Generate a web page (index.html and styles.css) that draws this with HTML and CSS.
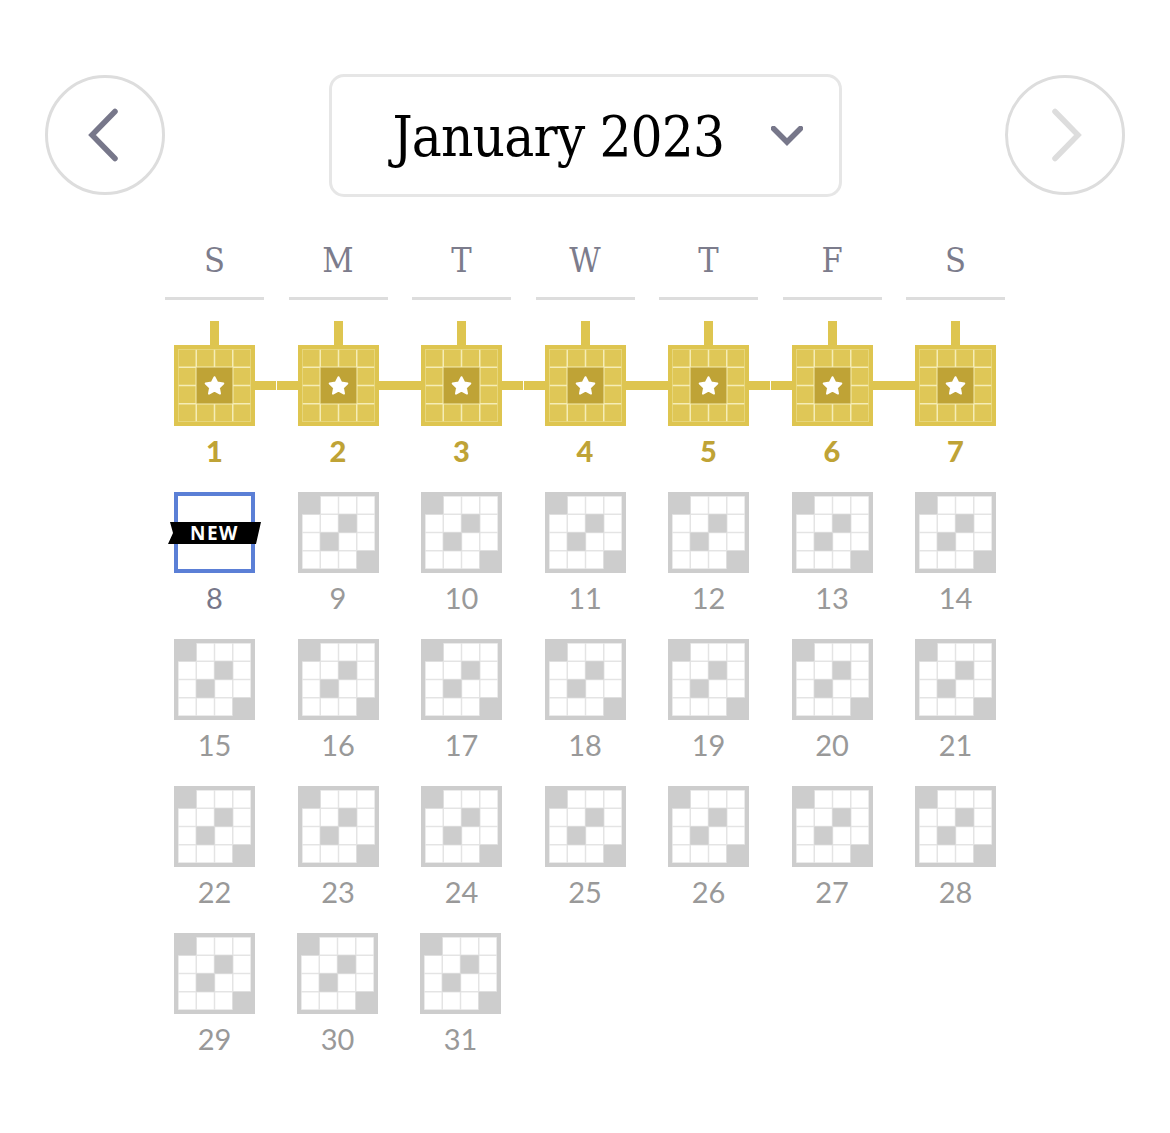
FILE: index.html
```html
<!DOCTYPE html>
<html lang="en">

<head>
  <meta charset="UTF-8">
  <meta name="viewport" content="width=device-width, initial-scale=1.0">
  <title>Archive</title>
  <link rel="stylesheet" href="styles.css">
</head>

<body>
  <svg class="defs" aria-hidden="true">
    <symbol id="whiteCells" viewBox="0 0 81 81">
      <rect x="23" y="4.75" width="16.75" height="16.75" />
      <rect x="41.25" y="4.75" width="16.75" height="16.75" />
      <rect x="59.5" y="4.75" width="16.75" height="16.75" />
      <rect x="4.75" y="23" width="16.75" height="16.75" />
      <rect x="23" y="23" width="16.75" height="16.75" />
      <rect x="59.5" y="23" width="16.75" height="16.75" />
      <rect x="4.75" y="41.25" width="16.75" height="16.75" />
      <rect x="41.25" y="41.25" width="16.75" height="16.75" />
      <rect x="59.5" y="41.25" width="16.75" height="16.75" />
      <rect x="4.75" y="59.5" width="16.75" height="16.75" />
      <rect x="23" y="59.5" width="16.75" height="16.75" />
      <rect x="41.25" y="59.5" width="16.75" height="16.75" />
    </symbol>
    <symbol id="blank" viewBox="0 0 81 81">
      <rect width="81" height="81" fill="#cdcdcd" />
      <rect x="4" y="4" width="73" height="73" fill="#e4e4e4" />
      <rect x="0" y="0" width="22.25" height="22.25" fill="#cdcdcd" />
      <rect x="40.5" y="22.25" width="18.25" height="18.25" fill="#cdcdcd" />
      <rect x="22.25" y="40.5" width="18.25" height="18.25" fill="#cdcdcd" />
      <rect x="58.75" y="58.75" width="22.25" height="22.25" fill="#cdcdcd" />
      <use href="#whiteCells" fill="#fff" />
    </symbol>
    <symbol id="solved" viewBox="0 0 81 81">
      <rect width="81" height="81" fill="#dec550" />
      <rect x="4" y="4" width="73" height="73" fill="#f5ecb5" />
      <rect x="4.4" y="4.4" width="72.2" height="72.2" fill="none" stroke="#e8d77c" stroke-width="0.8" />
      <rect x="4.75" y="4.75" width="16.75" height="16.75" fill="#dfc757" />
      <rect x="59.5" y="59.5" width="16.75" height="16.75" fill="#dfc757" />
      <rect x="23" y="41.25" width="16.75" height="16.75" fill="#dfc757" />
      <rect x="41.25" y="23" width="16.75" height="16.75" fill="#dfc757" />
      <use href="#whiteCells" fill="#dfc757" />
      <rect x="22.5" y="22.5" width="36" height="36" fill="#bfa336" />
      <path d="M40.5 32.2l2.8 5.4 6 .9-4.4 4.2 1.1 5.9-5.5-2.9-5.5 2.9 1.1-5.9-4.4-4.2 6-.9z" fill="#fff" stroke="#fff" stroke-width="2" stroke-linejoin="round" />
    </symbol>
  </svg>

  <div class="header">
    <button class="arrow">
      <svg class="arrow-icon" viewBox="0 0 36 60">
        <path d="M28 6.5L5 30l23 23.5" stroke="#77778a" />
      </svg>
    </button>
    <button class="month">
      <span class="month-name">January 2023</span>
      <svg class="month-icon" viewBox="0 0 32 20">
        <path d="M2.5 2.5L16 16 29.5 2.5" stroke="#77778a" />
      </svg>
    </button>
    <button class="arrow">
      <svg class="arrow-icon" viewBox="0 0 36 60">
        <path d="M8 6.5L31 30 8 53.5" stroke="#ddd" />
      </svg>
    </button>
  </div>

  <div class="calendar">
    <div class="week weekdays">
      <div class="weekday">S</div>
      <div class="weekday">M</div>
      <div class="weekday">T</div>
      <div class="weekday">W</div>
      <div class="weekday">T</div>
      <div class="weekday">F</div>
      <div class="weekday">S</div>
    </div>

    <div class="week">
      <div class="day done split"><div class="puzzle"><svg><use href="#solved" /></svg></div><div class="num">1</div></div>
      <div class="day done"><div class="puzzle"><svg><use href="#solved" /></svg></div><div class="num">2</div></div>
      <div class="day done split"><div class="puzzle"><svg><use href="#solved" /></svg></div><div class="num">3</div></div>
      <div class="day done"><div class="puzzle"><svg><use href="#solved" /></svg></div><div class="num">4</div></div>
      <div class="day done split"><div class="puzzle"><svg><use href="#solved" /></svg></div><div class="num">5</div></div>
      <div class="day done"><div class="puzzle"><svg><use href="#solved" /></svg></div><div class="num">6</div></div>
      <div class="day done"><div class="puzzle"><svg><use href="#solved" /></svg></div><div class="num">7</div></div>
    </div>

    <div class="week">
      <div class="day today"><div class="puzzle"><span class="ribbon">NEW</span></div><div class="num">8</div></div>
      <div class="day"><div class="puzzle"><svg><use href="#blank" /></svg></div><div class="num">9</div></div>
      <div class="day"><div class="puzzle"><svg><use href="#blank" /></svg></div><div class="num">10</div></div>
      <div class="day"><div class="puzzle"><svg><use href="#blank" /></svg></div><div class="num">11</div></div>
      <div class="day"><div class="puzzle"><svg><use href="#blank" /></svg></div><div class="num">12</div></div>
      <div class="day"><div class="puzzle"><svg><use href="#blank" /></svg></div><div class="num">13</div></div>
      <div class="day"><div class="puzzle"><svg><use href="#blank" /></svg></div><div class="num">14</div></div>
    </div>

    <div class="week">
      <div class="day"><div class="puzzle"><svg><use href="#blank" /></svg></div><div class="num">15</div></div>
      <div class="day"><div class="puzzle"><svg><use href="#blank" /></svg></div><div class="num">16</div></div>
      <div class="day"><div class="puzzle"><svg><use href="#blank" /></svg></div><div class="num">17</div></div>
      <div class="day"><div class="puzzle"><svg><use href="#blank" /></svg></div><div class="num">18</div></div>
      <div class="day"><div class="puzzle"><svg><use href="#blank" /></svg></div><div class="num">19</div></div>
      <div class="day"><div class="puzzle"><svg><use href="#blank" /></svg></div><div class="num">20</div></div>
      <div class="day"><div class="puzzle"><svg><use href="#blank" /></svg></div><div class="num">21</div></div>
    </div>

    <div class="week">
      <div class="day"><div class="puzzle"><svg><use href="#blank" /></svg></div><div class="num">22</div></div>
      <div class="day"><div class="puzzle"><svg><use href="#blank" /></svg></div><div class="num">23</div></div>
      <div class="day"><div class="puzzle"><svg><use href="#blank" /></svg></div><div class="num">24</div></div>
      <div class="day"><div class="puzzle"><svg><use href="#blank" /></svg></div><div class="num">25</div></div>
      <div class="day"><div class="puzzle"><svg><use href="#blank" /></svg></div><div class="num">26</div></div>
      <div class="day"><div class="puzzle"><svg><use href="#blank" /></svg></div><div class="num">27</div></div>
      <div class="day"><div class="puzzle"><svg><use href="#blank" /></svg></div><div class="num">28</div></div>
    </div>

    <div class="week week-last">
      <div class="day"><div class="puzzle"><svg><use href="#blank" /></svg></div><div class="num">29</div></div>
      <div class="day"><div class="puzzle"><svg><use href="#blank" /></svg></div><div class="num">30</div></div>
      <div class="day"><div class="puzzle"><svg><use href="#blank" /></svg></div><div class="num">31</div></div>
    </div>
  </div>
</body>

</html>
```

FILE: styles.css
```css
* {
  padding: 0;
  margin: 0;
  box-sizing: border-box;
}

body {
  background: #fff;
  font-family: "Lato", sans-serif;
}

.defs {
  display: block;
  width: 0;
  height: 0;
}

.header {
  display: flex;
  justify-content: space-between;
  align-items: flex-start;
  margin: 74px 45px 0;
}

.arrow {
  display: flex;
  justify-content: center;
  align-items: center;
  width: 120px;
  height: 120px;
  margin-top: 1px;
  border: solid 3px #ddd;
  border-radius: 50%;
  background: #fff;
}

.arrow-icon {
  display: block;
  width: 36px;
  height: 60px;
}

.arrow-icon path,
.month-icon path {
  fill: none;
  stroke-width: 5.5;
  stroke-linecap: round;
}

.month {
  display: flex;
  justify-content: space-between;
  align-items: center;
  width: 513px;
  height: 123px;
  padding: 0 36px 0 61px;
  border: solid 3px #e6e6e6;
  border-radius: 15px;
  background: #fff;
}

.month-name {
  margin-top: 3px;
  font-family: "DejaVu Serif", serif;
  font-stretch: condensed;
  font-size: 56px;
  line-height: 60px;
  letter-spacing: -0.85px;
  color: #000;
}

.month-icon {
  display: block;
  width: 32px;
  height: 20px;
}

.calendar {
  width: 840px;
  margin: 39px 0 0 165px;
}

.week {
  display: flex;
  gap: 24.5px;
  margin-bottom: 20px;
}

.week-last {
  gap: 24px;
}

.weekdays {
  margin-bottom: 45px;
}

.weekday {
  width: 99px;
  padding-bottom: 13px;
  border-bottom: solid 3px #ddd;
  font-family: "DejaVu Serif", serif;
  font-stretch: condensed;
  font-size: 34px;
  line-height: 48px;
  text-align: center;
  color: #7c7c8c;
}

.day {
  display: flex;
  flex-direction: column;
  align-items: center;
  width: 99px;
  height: 127px;
}

.puzzle {
  position: relative;
  width: 81px;
  height: 81px;
}

.puzzle svg {
  display: block;
  width: 81px;
  height: 81px;
}

.num {
  margin-top: 5px;
  font-size: 29px;
  line-height: 40px;
  color: #999;
}

.done .num {
  font-weight: 900;
  color: #bfa336;
}

.today .num {
  color: #77778a;
}

/* gold stubs: one going up, one joining the next day */
.done .puzzle::before {
  content: "";
  position: absolute;
  left: 36px;
  top: -24px;
  width: 9px;
  height: 24px;
  background: #dec550;
}

.done .puzzle::after {
  content: "";
  position: absolute;
  left: 81px;
  top: 36px;
  width: 42.5px;
  height: 9px;
  background: #dec550;
}

.done.split .puzzle::after {
  background: linear-gradient(to right, #dec550 21px, #fff 21px, #fff 22px, #dec550 22px);
}

.done:last-child .puzzle::after {
  display: none;
}

.today .puzzle {
  border: solid 4px #5b7fd6;
}

.ribbon {
  position: absolute;
  left: -10px;
  top: 26px;
  display: block;
  width: 93px;
  height: 22px;
  background: #000;
  clip-path: polygon(2px 0, 93px 0, 88px 22px, 0 22px, 5px 11px);
  font-family: "Open Sans", sans-serif;
  font-weight: 700;
  font-size: 19px;
  line-height: 22px;
  letter-spacing: 1.5px;
  text-align: center;
  color: #fff;
}
```
